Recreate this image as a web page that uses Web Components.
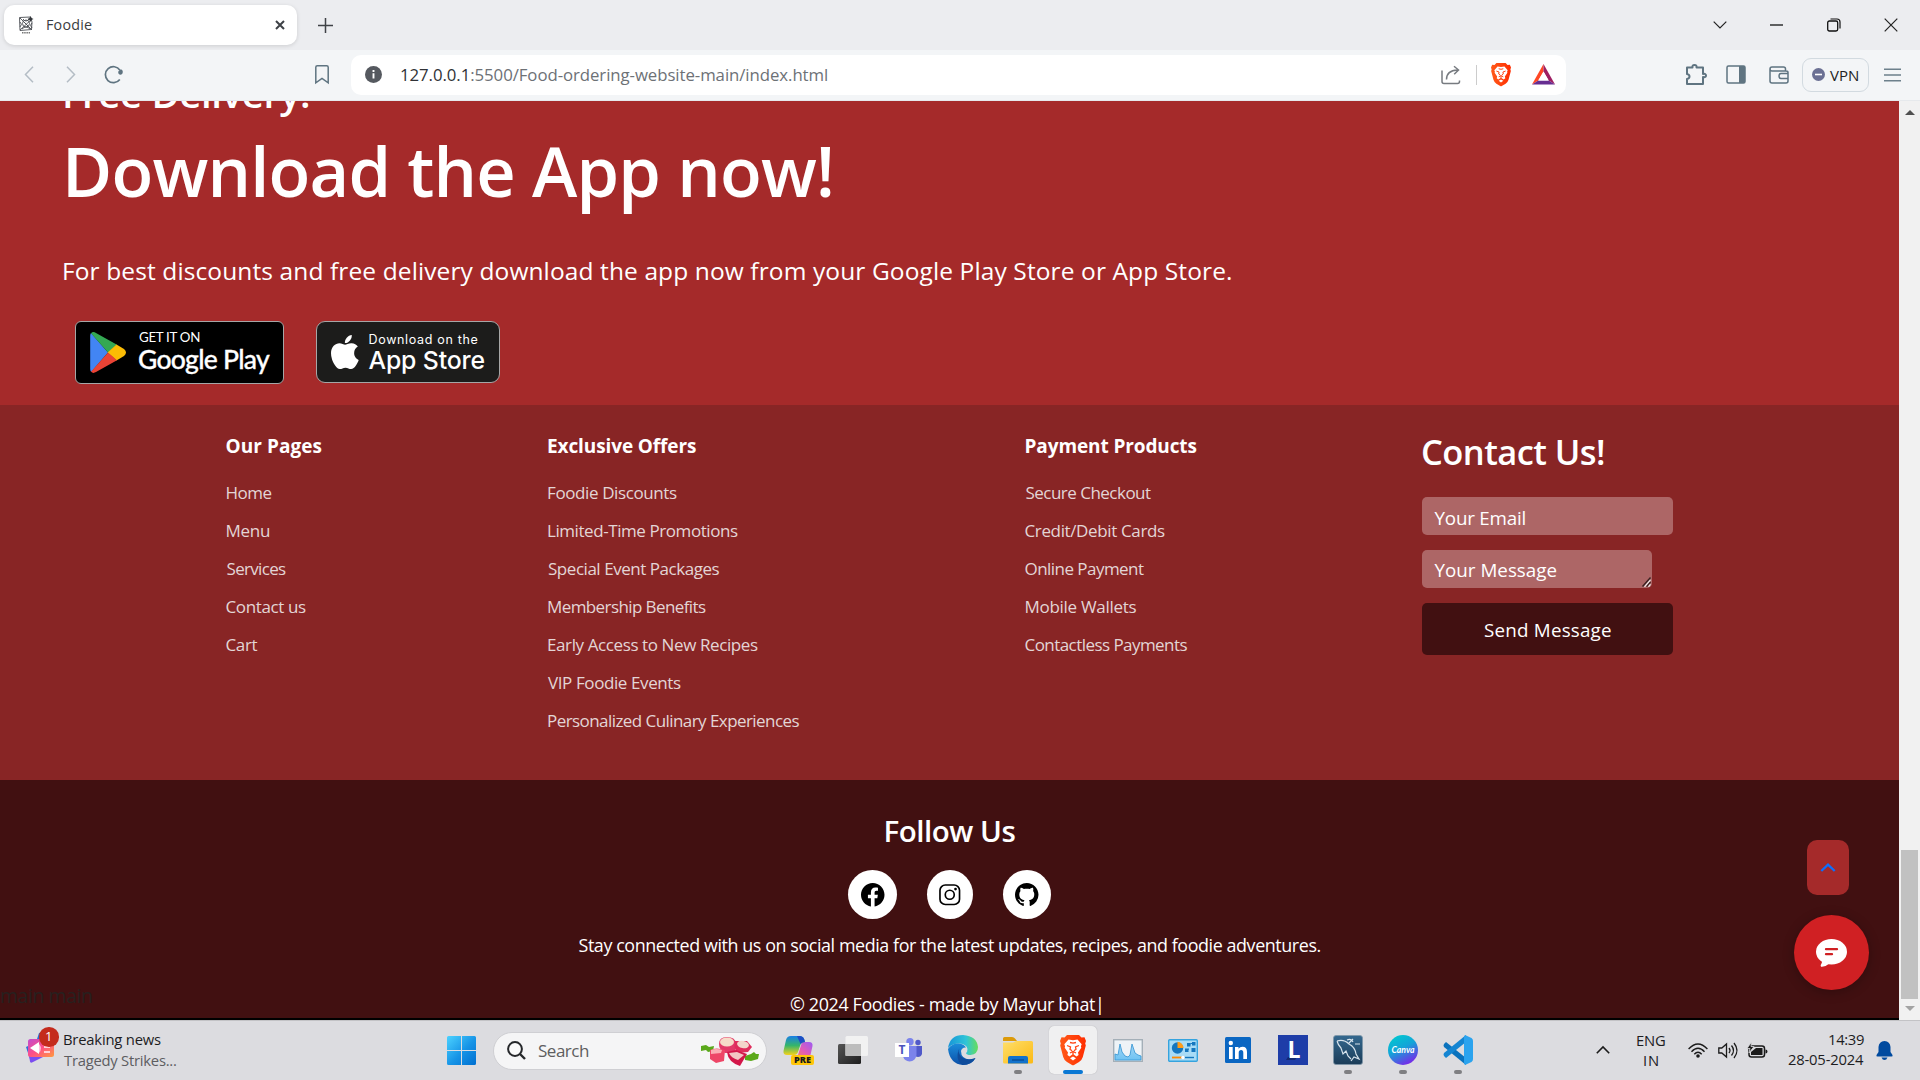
<!DOCTYPE html>
<html lang="en">
<head>
<meta charset="utf-8">
<title>Foodie</title>
<style>
html,body{margin:0;width:1920px;height:1080px;overflow:hidden;background:#dcdce0}
body{display:flex;flex-direction:column;font-family:"Open Sans","Noto Sans",sans-serif}
</style>
</head>
<body>
<browser-tabs></browser-tabs>
<browser-toolbar></browser-toolbar>
<page-view></page-view>
<task-bar></task-bar>
<script>
const lion = (id) => `<defs><linearGradient id="${id}" x1="0" x2="1"><stop offset="0" stop-color="#ff5a1a"/><stop offset="1" stop-color="#ff2d00"/></linearGradient></defs>
<path fill="url(#${id})" d="M7 0h12l2.5 2.5 3-.3L26 6l-.8 2.500.6 2-3 11.500Q22 25 19 27l-5 3q-1 .6-2 0l-5-3Q4 25 3.200 22L.2 10.500l.6-2L0 6l1.500-3.800 3 .3z"/>
<path fill="#fff" d="M8.500 4.500l4.500.8 4.500-.8 4.200 4.800-.8 2 .4 1.500-3.300 4.700.6 2.500-2.100 1.500-3.500-2.400-3.500 2.400-2.100-1.500.6-2.500-3.300-4.700.4-1.500-.8-2z"/><path fill="#fff" d="M10 23.200l3-1.700 3 1.700-3 2.200z"/>
<path fill="none" stroke="#ff4514" stroke-width="1.300" d="M7 10.500l3.500 1.300-.5 2.500 2 1.500M19 10.500l-3.500 1.300.5 2.500-2 1.500M10 18l3-1.500 3 1.500M13 16.500v3M10 7.500l3 .7 3-.7"/>`;
const ICONS = {
 favicon:[16,18,`<g fill="none" stroke="#4a4d52" stroke-width=".9"><path d="M1.500 1.500l11-.5 1.500 5-.5 7.500-11.500 1z"/><circle cx="8" cy="7.500" r="3.500"/><path d="M2 2l12 12M14 3L2 14M5 3q3 4 6 0M2 6q3 2 0 5M14 7q-3 2 0 5M4 13q4-4 8 0M6 6l4 4"/></g><path fill="#33363b" d="M12.500 0l1 2 2 1-2 1-1 2-1-2-2-1 2-1z"/><path stroke="#777" stroke-width="1.600" stroke-dasharray="1.500 .7" d="M4 16.700h8"/>`],
 x:[10,10,`<path d="M1 1l8 8M9 1L1 9" stroke="#3d4146" stroke-width="2"/>`],
 plus:[15,15,`<path d="M7.500 0v15M0 7.500h15" stroke="#3f4246" stroke-width="1.500"/>`],
 chevDown:[14,8,`<path d="M.7.7L7 7 13.300.7" fill="none" stroke="#222" stroke-width="1.200"/>`],
 min:[13,2,`<path d="M0 1h13" stroke="#111" stroke-width="1.300"/>`],
 restore:[14,14,`<path d="M3.500 1h6.500a3 3 0 0 1 3 3v6.500" fill="none" stroke="#111" stroke-width="1.200"/><rect x=".7" y="3" width="10" height="10" rx="1.700" fill="none" stroke="#111" stroke-width="1.300"/>`],
 close:[14,14,`<path d="M.7.700l12.600 12.600M13.300.7L.7 13.300" stroke="#222" stroke-width="1.200"/>`],
 back:[10,17,`<path d="M9 .8L1.500 8.500 9 16.200" fill="none" stroke="#b4bdc5" stroke-width="1.500"/>`],
 fwd:[10,17,`<path d="M1 .8l7.500 7.700L1 16.200" fill="none" stroke="#b4bdc5" stroke-width="1.500"/>`],
 reload:[20,19,`<path d="M15.800 14.500A8 8 0 1 1 16 5.200" fill="none" stroke="#5f7481" stroke-width="1.700"/><path d="M14.300 6.500q3-3.500 4.400-.5.500 3-2 3.700-3-.2-2.400-3.200z" fill="#5f7481"/>`],
 bookmark:[14,19,`<path d="M2.300.8h9.400q1.500 0 1.500 1.500v15.500L7 13.500.8 17.800V2.300Q.8.8 2.300.8z" fill="none" stroke="#5f7481" stroke-width="1.500"/>`],
 info:[17,17,`<circle cx="8.500" cy="8.500" r="8.500" fill="#55595f"/><path d="M8.500 7.300v5.200M8.500 4v1.900" stroke="#fff" stroke-width="1.900"/>`],
 share:[20,20,`<path d="M1 5.500V16.500q0 2 2 2h13.500q2 0 2-2v-1" fill="none" stroke="#777b80" stroke-width="1.500"/><path d="M5.500 14.500q0-9 11-9.500M13 1.200L17.500 5 13.200 9.200" fill="none" stroke="#777b80" stroke-width="1.500"/>`],
 brave:[26,30,lion('b')],
 bat:[23,21,`<path fill="#ff4724" d="M11.500 0v7.500L6.300 16.600 0 20.500z"/><path fill="#9e1f63" d="M11.500 0L23 20.500l-6.300-3.900-5.200-9.100z"/><path fill="#662d91" d="M0 20.500l6.300-3.900h10.400L23 20.500z"/><path fill="#fff" d="M11.500 7.500l5.200 9.100H6.300z"/>`],
 puzzle:[22,22,`<path d="M2 3.500h5.500q-.5-2.500 2-2.500t2 2.500H18v6.500q3-.7 3 1.500t-3 1.500V20H2v-5q2.500-.5 2.500-2.500T2 10z" fill="none" stroke="#5f7481" stroke-width="2" stroke-linejoin="round"/>`],
 side:[20,19,`<rect x="1" y="1" width="18" height="17" rx="1.500" fill="none" stroke="#5f7481" stroke-width="1.500"/><path fill="#5f7481" d="M13 1h6v17h-6z"/>`],
 wallet:[20,18,`<path d="M1 3v12q0 2 2 2h14q2 0 2-2V6.500q0-1.500-2-1.500H3Q1 5 1 3t2-2h11.500q2 0 2 2v2M19 7.500h-7q-2 0-2 2.500t2 2.500h7" fill="none" stroke="#5f7481" stroke-width="1.500"/>`],
 vpn:[13,13,`<circle cx="6.500" cy="6.500" r="6.500" fill="#6b7093"/><path d="M3 6.500h7" stroke="#fff" stroke-width="1.600"/>`],
 menu:[17,14,`<path d="M0 1.300h17M0 7h17M0 12.700h17" stroke="#6d808c" stroke-width="1.500"/>`],
 play:[36,41,`<path fill="#4285f4" d="M.2 4v33q0 2 1 3L18 20.500 1 1q-.8 1-.8 3z"/><path fill="#34a853" d="M1 1.200Q3-.8 6 .9l21 11.800-9 7.800z"/><path fill="#fbbc04" d="M26.500 12.500l7.500 4.500q4 3.500 0 7l-7.500 4.500-9-8z"/><path fill="#ea4335" d="M1 39.800q2 2 5 .3l21-11.800-9-7.800z"/>`],
 apple:[367,448,`<path fill="#fff" transform="translate(-4 -32)" d="M318.700 268.700c-.2-36.700 16.400-64.400 50-84.800-18.800-26.900-47.200-41.700-84.700-44.600-35.500-2.800-74.300 20.700-88.500 20.700-15 0-49.400-19.700-76.400-19.700C63.300 141.200 4 184.800 4 273.500q0 39.300 14.400 81.200c12.800 36.700 59 126.700 107.200 125.200 25.200-.6 43-17.900 75.800-17.900 31.800 0 48.300 17.900 76.400 17.900 48.600-.7 90.400-82.500 102.600-119.300-65.200-30.700-61.700-90-61.700-91.900zm-56.600-164.200c27.300-32.400 24.800-61.900 24-72.500-24.100 1.400-52 16.400-67.900 34.900-17.500 19.800-27.800 44.300-25.600 71.900 26.100 2 49.900-11.400 69.500-34.300z"/>`],
 facebook:[16,16,`<path d="M16 8.049c0-4.446-3.582-8.050-8-8.050C3.580 0-.002 3.603-.002 8.050c0 4.017 2.926 7.347 6.750 7.951v-5.625h-2.030V8.050H6.750V6.275c0-2.017 1.195-3.131 3.022-3.131.876 0 1.791.157 1.791.157v1.980h-1.009c-.993 0-1.303.621-1.303 1.258v1.510h2.218l-.354 2.326H9.250V16c3.824-.604 6.750-3.934 6.750-7.951"/>`],
 instagram:[22,22,`<rect x="1" y="1" width="20" height="20" rx="5.500" fill="none" stroke="#000" stroke-width="1.700"/><circle cx="11" cy="11" r="4.600" fill="none" stroke="#000" stroke-width="1.700"/><circle cx="16.900" cy="5.200" r="1.400"/>`],
 github:[16,16,`<path d="M8 0C3.580 0 0 3.580 0 8c0 3.540 2.290 6.530 5.470 7.590.4.070.55-.17.55-.38 0-.19-.01-.82-.01-1.490-2.010.37-2.530-.49-2.690-.94-.09-.23-.48-.94-.82-1.130-.28-.15-.68-.52-.01-.53.63-.01 1.080.58 1.230.82.72 1.210 1.870.87 2.330.66.070-.52.28-.87.51-1.070-1.780-.2-3.640-.89-3.640-3.950 0-.87.31-1.590.82-2.150-.08-.2-.36-1.020.08-2.120 0 0 .67-.21 2.200.82.64-.18 1.320-.27 2-.27s1.360.09 2 .27c1.530-1.040 2.200-.82 2.200-.82.44 1.100.16 1.920.08 2.120.51.56.82 1.270.82 2.150 0 3.070-1.870 3.750-3.650 3.950.29.25.54.73.54 1.480 0 1.070-.01 1.930-.01 2.200 0 .21.15.46.55.38A8.010 8.010 0 0 0 16 8c0-4.420-3.580-8-8-8"/>`],
 up:[16,9,`<path d="M1.300 8L8 1.700 14.700 8" fill="none" stroke="#0d6efd" stroke-width="2.300"/>`],
 chat:[31,28,`<path fill="#fff" d="M7 20l-1.500 4.500q-1.500 2-.5 3.200 4 .5 8-3z"/><ellipse cx="15.500" cy="12.700" rx="15.500" ry="12.700" fill="#fff"/><path d="M10 10.200h11M10 15.200h6" stroke="#d02023" stroke-width="2.300" stroke-linecap="round"/>`],
 arrUp:[10,5,`<path fill="#505050" d="M5 0l5 5H0z"/>`],
 arrDown:[10,5,`<path fill="#a3a3a3" d="M5 5l5-5H0z"/>`],
 grip:[9,10,`<path d="M.5 9.500l8-9M4.500 9.500l4-4.500" stroke="#3b2020" stroke-width="1.400"/><path d="M2.500 9.800l6-7M6.500 9.800l2-2.500" stroke="#eee" stroke-width="1.200"/>`],
 news:[28,31,`<defs><linearGradient id="n" x1="0" y1="0" x2="1" y2="1"><stop offset="0" stop-color="#c04bd0"/><stop offset=".5" stop-color="#ff4f86"/><stop offset="1" stop-color="#ff9a3d"/></linearGradient></defs><path fill="#2a6fd8" d="M13 1l6-1 5 7H11zM0 15l4-2v14z"/><path fill="#7b4df0" d="M3 23h18l-15 7.500q-2 .5-2-1z"/><rect x="2" y="7" width="26" height="18" rx="2.500" fill="url(#n)"/><path fill="#fff" d="M4 16l9-6v12z"/><path fill="#ffc0dc" d="M13 12q4 4 0 9z"/><path d="M18 15h6M18 20h6" stroke="#ffd0d8" stroke-width="2"/>`],
 windows:[29,29,`<defs><linearGradient id="w" x1="0" y1="0" x2="1" y2="1"><stop offset="0" stop-color="#4cd2ff"/><stop offset=".55" stop-color="#1693e6"/><stop offset="1" stop-color="#006fd0"/></linearGradient></defs><path fill="url(#w)" d="M1.500 0H14v14H0V1.500Q0 0 1.500 0zM15 0h12.500Q29 0 29 1.500V14H15zM0 15h14v14H1.500Q0 29 0 27.500zM15 15h14v12.500q0 1.500-1.500 1.500H15z"/>`],
 search:[19,19,`<circle cx="8" cy="8" r="6.900" fill="#fbfbfb" stroke="#26282b" stroke-width="2"/><path d="M13 13l5 5" stroke="#26282b" stroke-width="2.400"/>`],
 radish:[60,30,`<path fill="#5aa81a" d="M1 10l5-1 3 2 5-1-1 5-5 1-2-2-5 1zM45 20l6-2 3-2 2 2 3 0-1 5-7 2-6-1z"/><path fill="#e23a68" d="M19 8q0-7 8-7t9 6l-1 10-10 0q-6-3-6-9z"/><ellipse cx="27" cy="6" rx="7" ry="4.500" fill="#f6dcc9"/><path fill="#df2d5c" d="M35 5l12 0 5 6-4 5-10 1q-5-4-3-12z"/><ellipse cx="43" cy="8.500" rx="6" ry="3.700" fill="#f3d6cb" transform="rotate(12 43 8.500)"/><path fill="#ee4667" d="M10 14q6-3 15 0l-1 11-8 2-6-4z"/><path fill="#fbaeb4" d="M11 14q5-2 11 0l-1 3-10 1z"/><path fill="#d3174a" d="M27 16l9-2 11 4-7 12q-12-4-13-14z"/><path fill="#f3c6c4" d="M29 17l8-1 7 3-6 5q-7-2-9-7z"/>`],
 copilot:[31,30,`<defs><linearGradient id="c1" x1="0" y1="0" x2="0" y2="1"><stop offset="0" stop-color="#1a7fe6"/><stop offset=".5" stop-color="#35b56a"/><stop offset="1" stop-color="#f5d21c"/></linearGradient><linearGradient id="c2" x1="1" y1="0" x2="0" y2="1"><stop offset="0" stop-color="#9b5bf5"/><stop offset=".5" stop-color="#e45bb5"/><stop offset="1" stop-color="#ff8e4a"/></linearGradient></defs><path fill="url(#c2)" d="M19 7h7q4 0 3.500 4l-2 9q-1 4-5 4H10q4 0 5-4z"/><path fill="url(#c1)" d="M8 1h9q4 0 5 6-4 0-5 4l-2 6q-1 3-4 3H4q-4 0-3.500-4L3 5q1-4 5-4z"/><path fill="#1d4fc4" d="M14 1h3q4 0 5 6-3 0-4.500 2z"/><rect x="8" y="20" width="23" height="10" rx="2" fill="#ffc60a"/><text x="19.500" y="28.200" text-anchor="middle" font-family="Open Sans" font-weight="800" font-size="8.500" textLength="17" lengthAdjust="spacingAndGlyphs" fill="#1a1a1a">PRE</text>`],
 taskview:[30,28,`<defs><linearGradient id="t" x1="0" y1="0" x2="1" y2="1"><stop offset="0" stop-color="#555"/><stop offset="1" stop-color="#1e1e1e"/></linearGradient></defs><rect x="0" y="8" width="23" height="20" rx="1.500" fill="url(#t)"/><rect x="7.500" y="0" width="22.500" height="20" rx="1.500" fill="#f2f2f2"/><rect x="7.500" y="8" width="15.500" height="12" fill="#bdbdbd"/>`],
 teams:[27,24,`<circle cx="15" cy="3.700" r="3.700" fill="#7b83eb"/><circle cx="23" cy="4.500" r="2.700" fill="#5059c9"/><path fill="#5059c9" d="M19 8h8v8q-1 3-4 3t-4-3z"/><path fill="#7b83eb" d="M8 8h13.500v9q-1 6-7 6.500-5-.5-6.500-5z"/><rect x="0" y="5" width="14" height="14" fill="#fff"/><text x="7" y="16.200" text-anchor="middle" font-family="Open Sans" font-weight="700" font-size="12" fill="#4b53bc">T</text>`],
 edge:[30,30,`<defs><linearGradient id="e1" x1="0" x2="1"><stop offset="0" stop-color="#1795d8"/><stop offset=".6" stop-color="#2fc4d8"/><stop offset="1" stop-color="#67dd5a"/></linearGradient><linearGradient id="e2" x1="0" y1="0" x2="0" y2="1"><stop offset="0" stop-color="#1b8ddb"/><stop offset="1" stop-color="#0b4fa8"/></linearGradient></defs><path fill="url(#e1)" d="M0 13Q2 0 15 0q14 1 15 12 0 7-7.500 8-4 0-4.500-2 1.500-1 1.500-4-1-5-8-5.500Q4 8.500 0 13z"/><path fill="url(#e2)" d="M0 14Q4 8 11 8.500q5 .500 7 4-4-.5-5 3.500 0 8 9 8.500 3 0 5.500-1.500Q24 30 15 30 2 29 0 14z"/><path fill="#0f4c9c" d="M12 12q-3 5 1 9.500 5 5 14.500 1.500-4 7-13 7Q6 24 12 12z"/>`],
 folder:[30,27,`<defs><linearGradient id="f" x1="0" y1="0" x2="1" y2="1"><stop offset="0" stop-color="#ffdf6b"/><stop offset="1" stop-color="#fbb914"/></linearGradient></defs><path fill="#dc9a0a" d="M1.500 0H9q2 0 3 1.500L14 4H0V1.500Q0 0 1.500 0z"/><path fill="url(#f)" d="M0 5.500h10L13 4h15.500Q30 4 30 5.500V25q0 1.500-1.500 1.500h-27Q0 26.500 0 25z"/><path fill="#1272cc" d="M5 26.500V21q0-2 2-2h16q2 0 2 2v5.500z"/><path d="M9 23h12" stroke="#0a4f99" stroke-width="1.500"/>`],
 perf:[30,23,`<defs><linearGradient id="p" x1="0" y1="0" x2="0" y2="1"><stop offset="0" stop-color="#a5d5f5"/><stop offset="1" stop-color="#6ec3f3"/></linearGradient></defs><rect x=".7" y=".7" width="28.600" height="21.600" fill="#eef3f7" stroke="#a4afb8" stroke-width="1.400"/><path fill="url(#p)" stroke="#3e9bd6" stroke-width=".9" d="M2 21v-6l3 1 2-11 2 8 3 4 3 1 2-2 2-11 3 9 3 2 3 1v4z"/>`],
 control:[30,23,`<rect x=".7" y=".7" width="28.600" height="21.600" rx="1" fill="#a9dcf6" stroke="#35a3de" stroke-width="1.400"/><circle cx="9.500" cy="9" r="5.700" fill="#1577bf"/><path fill="#ff9c1a" d="M9.500 9V2.800A6 6 0 0 1 15.500 9z"/><path d="M18 11l3-1M22 5l3-1" stroke="#1577bf" stroke-width="1"/><g fill="#1577bf"><rect x="17" y="9.500" width="3.500" height="3.500"/><rect x="19" y="4" width="3.500" height="3.500"/><rect x="24" y="3" width="3.500" height="3.500"/><rect x="23.500" y="9" width="4" height="4"/></g><path d="M4 18.500h10" stroke="#ff8a00" stroke-width="1.800"/><path d="M15 18.500h11" stroke="#1577bf" stroke-width="1.400"/><circle cx="15" cy="18.500" r="1.800" fill="#fff"/>`],
 linkedin:[26,26,`<rect width="26" height="26" rx="1.500" fill="#0a66c2"/><circle cx="5.800" cy="6" r="2.200" fill="#fff"/><path fill="#fff" d="M4 10h3.700v12H4zM10 10h3.500v1.700q1.300-2 4-2 4.500 0 4.500 5.300v7h-3.700v-6.300q0-2.800-2.200-2.800-2.400 0-2.400 2.800V22H10z"/>`],
 ell:[30,30,`<rect width="30" height="30" fill="#1e3da8"/><path fill="#142a72" d="M10 22l-2 3h9l2-3z"/><text x="16" y="23" text-anchor="middle" font-family="Open Sans" font-weight="700" font-size="23" fill="#fff">L</text>`],
 mysql:[30,30,`<defs><linearGradient id="m" x1="0" y1="0" x2="0" y2="1"><stop offset="0" stop-color="#34688f"/><stop offset="1" stop-color="#1b3c58"/></linearGradient></defs><rect x=".5" y=".5" width="29" height="29" rx="2.500" fill="url(#m)" stroke="#7f97a8" stroke-width=".8"/><path d="M4 6q7-2 12 3 6 3 7 10l3 5-5-2-3 4M4 6q1 4 4 7l2 6 3-3 2 5 3 3M14 5q4-2 6 2M22 9h5M20 4l-4 4" fill="none" stroke="#d7e3ec" stroke-width="1.200"/>`],
 canva:[30,30,`<defs><linearGradient id="v" x1=".2" y1="0" x2=".7" y2="1"><stop offset="0" stop-color="#00c9cf"/><stop offset=".45" stop-color="#13a4d8"/><stop offset="1" stop-color="#7d22ea"/></linearGradient></defs><circle cx="15" cy="15" r="15" fill="url(#v)"/><text x="15" y="18" text-anchor="middle" font-family="Lato" font-style="italic" font-weight="700" font-size="9" textLength="23" lengthAdjust="spacingAndGlyphs" fill="#fff">Canva</text>`],
 vscode:[30,30,`<path fill="#0a72bd" d="M1 9l2-2 20 16v7L1 12Q0 10.500 1 9z"/><path fill="#1485d2" d="M1 21l2 2L23 7V0L1 18q-1 1.500 0 3z"/><path fill="#2ba3ee" d="M22 0l6.500 3q1.500 1 1.500 3v18q0 2-1.500 3L22 30q-1-1-1-3V3q0-2 1-3z"/>`],
 chevUp:[14,8,`<path d="M.8 7.200L7 1l6.200 6.200" fill="none" stroke="#1b1b1b" stroke-width="1.600"/>`],
 wifi:[20,15,`<g fill="none" stroke="#1b1b1b" stroke-width="1.400"><path d="M.6 6Q10-4 19.400 6M3.500 8.700q6.500-7 13 0M6.300 11.200q3.700-4 7.400 0"/></g><circle cx="10" cy="13" r="1.800" fill="#1b1b1b"/>`],
 vol:[20,17,`<g fill="none" stroke="#1b1b1b" stroke-width="1.300"><path d="M.8 6v5h3l4.700 4V2L3.800 6z"/><path d="M11 6q2 2.500 0 5M13.500 3.500q4 5 0 10M16 1q6 7.500 0 15"/></g>`],
 battery:[21,16,`<rect x="2" y="4" width="15.500" height="11" rx="2.500" fill="none" stroke="#1b1b1b" stroke-width="1.500"/><path fill="#1b1b1b" d="M18.500 7.500q2 0 2 2t-2 2zM4 13V10l5-4h6.500v7z"/><path fill="#1b1b1b" stroke="#dcdce0" stroke-width=".8" d="M4.500 0L0 6.500h3L2 11l5-6.500H4z"/>`],
 bell:[17,19,`<path fill="#004a9f" d="M8.500 0q5.500.3 6 6v5l2 3q.5 1.500-1 1.500H1.500Q0 15.500.5 14l2-3V6Q3 .3 8.500 0zM5.500 16.500h6q-1 2.500-3 2.500t-3-2.500z"/>`]
};

const make = (name, html, setup) => customElements.define(name, class extends HTMLElement {
  constructor(){ super(); this.attachShadow({mode:'open'}).innerHTML = html; }
  connectedCallback(){ if (setup) setup.call(this); }
});

make('ui-icon', `<style>:host{display:block;flex:none;line-height:0}svg{display:block;overflow:visible}</style>`, function(){
  const [w,h,body] = ICONS[this.getAttribute('name')];
  const W = this.getAttribute('w') || w, H = this.getAttribute('h') || h;
  this.shadowRoot.querySelectorAll('svg').forEach(s => s.remove());
  this.shadowRoot.innerHTML += `<svg width="${W}" height="${H}" viewBox="0 0 ${w} ${h}" preserveAspectRatio="none">${body}</svg>`;
});

make('browser-tabs', `<style>
:host{display:flex;height:50px;flex:none;background:#ecedf0;align-items:center;font-size:14.300px;color:#3a3d41;box-sizing:border-box;padding-left:4px}
.tab{display:flex;align-items:center;width:293px;height:40px;background:#fff;border-radius:10px;box-shadow:0 1px 4px #0002;box-sizing:border-box;padding:0 12px 0 14px;line-height:40px}
.tab ui-text{margin-left:13px}.tab .c{margin-left:auto}
.plus{margin-left:21px}.win{margin-left:auto;display:flex;width:229px}.win span{width:57.200px;display:flex;justify-content:center;align-items:center}
</style><div class="tab"><ui-icon name="favicon"></ui-icon><ui-text w="45">Foodie</ui-text><ui-icon class="c" name="x"></ui-icon></div>
<ui-icon class="plus" name="plus"></ui-icon><div class="win"><span><ui-icon name="chevDown"></ui-icon></span><span><ui-icon name="min"></ui-icon></span><span><ui-icon name="restore"></ui-icon></span><span><ui-icon name="close"></ui-icon></span></div>`);

make('browser-toolbar', `<style>
:host{display:flex;height:51px;flex:none;background:#f3f5f7;align-items:center;box-sizing:border-box;padding:0 0 1px 24px;border-bottom:1px solid #e6e9ec}
.fwd{margin-left:32px}.rel{margin-left:28px}.bm{margin-left:191px}
.bar{margin-left:22px;width:1215px;height:40px;background:#fff;border-radius:10px;display:flex;align-items:center;padding-left:14px;box-sizing:border-box;font-size:16.800px;line-height:39px;color:#6d7176}
.bar b{font-weight:400;color:#303236}
.bar .u{margin-left:19px}.bar .s{margin-left:auto}.bar i{width:1px;height:20px;background:#ccc;margin:0 14px 0 15px}.bar .bat{margin:0 11px 0 21px}
.pz{margin-left:119px}.sd{margin-left:19px}.wl{margin-left:23px}
.vpn{margin-left:13px;width:67px;height:34px;box-sizing:border-box;border:1px solid #d2dae0;border-radius:9px;display:flex;align-items:center;padding-left:9px;font-size:15px;line-height:32px;color:#222;gap:5px}
.mn{margin-left:15px}
</style><ui-icon name="back"></ui-icon><ui-icon class="fwd" name="fwd"></ui-icon><ui-icon class="rel" name="reload"></ui-icon><ui-icon class="bm" name="bookmark"></ui-icon>
<div class="bar"><ui-icon name="info"></ui-icon><ui-text class="u" w="426"><b>127.0.0.1</b>:5500/Food-ordering-website-main/index.html</ui-text>
<ui-icon class="s" name="share"></ui-icon><i></i><ui-icon name="brave" w="20" h="23"></ui-icon><ui-icon class="bat" name="bat"></ui-icon></div>
<ui-icon class="pz" name="puzzle"></ui-icon><ui-icon class="sd" name="side"></ui-icon><ui-icon class="wl" name="wallet"></ui-icon>
<div class="vpn"><ui-icon name="vpn"></ui-icon><ui-text w="28">VPN</ui-text></div><ui-icon class="mn" name="menu"></ui-icon>`);

make('store-badge', `<style>
:host{display:flex;box-sizing:border-box;border:1px solid #a6a6a6;color:#fff}
.t{display:flex;flex-direction:column;align-items:flex-start}
</style><slot name="logo"></slot><div class="t"><slot></slot></div>`);

make('app-promo', `<style>
:host{display:flex;flex-direction:column;align-items:flex-start;height:304px;flex:none;box-sizing:border-box;padding-left:63px;background:#a52a2a;color:#fff;overflow:hidden}
.a{font-size:38.500px;font-weight:600;line-height:48px;margin-top:-32px;margin-left:2px}
.b{font-size:68.500px;font-weight:600;line-height:84px;margin-top:12px;margin-left:5px}
.c{font-size:24.500px;line-height:34px;margin-top:41px;margin-left:1px}
.r{display:flex;margin:33px 0 0 12px;gap:32px}
.g{width:208.500px;height:62.500px;border-radius:6px;background:#000;padding-left:14px;font-family:Lato,sans-serif}
.g [slot=logo]{margin-top:10px}.g .l1{font-size:13.300px;line-height:16px;margin:7px 0 0 13px}.g .l2{font-size:26.500px;line-height:30px;font-weight:500;-webkit-text-stroke:.3px #fff;margin:-1px 0 0 13px}
.p{width:184.500px;height:61.500px;border-radius:9px;background:#1c1c1b;padding-left:14px;font-family:Inter,sans-serif}
.p [slot=logo]{margin-top:12.500px}.p .l1{font-size:12.500px;line-height:16px;margin:10px 0 0 12px}.p .l2{font-size:24.800px;line-height:28px;font-weight:500;margin:-2px 0 0 11px}
</style><ui-text class="a" w="244">Free Delivery!</ui-text><ui-text class="b" w="763">Download the App now!</ui-text>
<ui-text class="c" w="1167">For best discounts and free delivery download the app now from your Google Play Store or App Store.</ui-text>
<div class="r"><store-badge class="g"><ui-icon slot="logo" name="play"></ui-icon><ui-text class="l1" w="61">GET IT ON</ui-text><ui-text class="l2" w="131">Google Play</ui-text></store-badge>
<store-badge class="p"><ui-icon slot="logo" name="apple" w="27" h="34"></ui-icon><ui-text class="l1" w="108">Download on the</ui-text><ui-text class="l2" w="116">App Store</ui-text></store-badge></div>`);

make('link-column', `<style>
:host{display:flex;flex-direction:column;align-items:flex-start;padding-top:25.500px;font-size:17px;line-height:38px;color:#e3d5d5}
::slotted([slot=head]){font-size:19px;font-weight:700;line-height:30px;color:#fff;margin-bottom:13px}
</style><slot name="head"></slot><slot></slot>`);

make('contact-form', `<style>
:host{display:flex;flex-direction:column;align-items:flex-start;padding-top:25px;color:#fff;width:251px;font-size:18.800px}
.h{font-size:34.500px;font-weight:600;line-height:44px;margin-bottom:23px;margin-left:1px}
.f{height:38px;border-radius:5px;background:#ad6666;width:251px;box-sizing:border-box;padding-left:12.500px;margin-bottom:15px;line-height:43px;display:flex;justify-content:space-between}
.m{width:230px;line-height:41px}.m ui-icon{align-self:flex-end;margin:0 1px 1px 0}
.s{height:52px;width:251px;border-radius:5px;background:#411011;line-height:55px;display:flex;justify-content:center}
</style><ui-text class="h" w="181">Contact Us!</ui-text><div class="f"><ui-text w="91">Your Email</ui-text></div>
<div class="f m"><ui-text w="122">Your Message</ui-text><ui-icon name="grip"></ui-icon></div><div class="s"><ui-text w="127">Send Message</ui-text></div>`);

make('footer-links', `<style>
:host{display:flex;align-items:flex-start;height:375px;flex:none;background:#882525;box-sizing:border-box;padding-left:226.500px}
.c1{width:321.500px}.c2{width:477.500px}.c3{width:396.500px}
</style><link-column class="c1"><ui-text slot="head" w="95">Our Pages</ui-text><ui-text w="45">Home</ui-text><ui-text w="42.500">Menu</ui-text><ui-text w="59.500">Services</ui-text><ui-text w="79.500">Contact us</ui-text><ui-text w="31">Cart</ui-text></link-column>
<link-column class="c2"><ui-text slot="head" w="148">Exclusive Offers</ui-text><ui-text w="129">Foodie Discounts</ui-text><ui-text w="190">Limited-Time Promotions</ui-text><ui-text w="171.500">Special Event Packages</ui-text><ui-text w="158">Membership Benefits</ui-text><ui-text w="210">Early Access to New Recipes</ui-text><ui-text w="133">VIP Foodie Events</ui-text><ui-text w="251.500">Personalized Culinary Experiences</ui-text></link-column>
<link-column class="c3"><ui-text slot="head" w="171">Payment Products</ui-text><ui-text w="125.500">Secure Checkout</ui-text><ui-text w="139.500">Credit/Debit Cards</ui-text><ui-text w="118.500">Online Payment</ui-text><ui-text w="111">Mobile Wallets</ui-text><ui-text w="162">Contactless Payments</ui-text></link-column>
<contact-form></contact-form>`);

make('follow-us', `<style>
:host{display:flex;flex-direction:column;align-items:center;height:238px;flex:none;background:#411011;box-sizing:border-box;padding-top:30.500px;color:#fff;font-size:17.900px;line-height:26px}
.h{font-size:29.500px;font-weight:600;line-height:40px;margin-left:2px}
.r{display:flex;gap:30px;margin-top:19.500px}
.r span{height:49px;border-radius:50%;background:#fff;display:flex;align-items:center;justify-content:center}
.s{margin-top:13px}.c{margin:33px 8px 0 0}
</style><ui-text class="h" w="130">Follow Us</ui-text>
<div class="r"><span style="width:49px"><ui-icon name="facebook" w="23.500" h="23.500"></ui-icon></span><span style="width:46px"><ui-icon name="instagram" w="21.500" h="21.500"></ui-icon></span><span style="width:48px"><ui-icon name="github" w="23.500" h="23.500"></ui-icon></span></div>
<ui-text class="s" w="742">Stay connected with us on social media for the latest updates, recipes, and foodie adventures.</ui-text>
<ui-text class="c" w="311">© 2024 Foodies - made by Mayur bhat|</ui-text>`);

make('scroll-bar', `<style>
:host{display:flex;flex-direction:column;align-items:center;width:21px;background:#f1f1f1;box-sizing:border-box;padding:9px 0 9px}
.t{width:17px;height:149px;background:#c1c1c1;margin:735px 0 7px}
</style><ui-icon name="arrUp"></ui-icon><div class="t"></div><ui-icon name="arrDown"></ui-icon>`);

make('page-view', `<style>
:host{display:flex;height:919px;flex:none;background:#000}
.doc{position:relative;width:1899px;height:917px;overflow:hidden;display:flex;flex-direction:column}
.top,.chat,.main{position:absolute;display:flex;align-items:center;justify-content:center}
.top{left:1807px;top:739px;width:42px;height:55px;border-radius:10px;background:#a52a2a}
.chat{left:1794px;top:814px;width:75px;height:75px;border-radius:50%;background:#d02023;box-shadow:0 2px 12px #0004}
.main{left:1px;top:881px;font-size:19.500px;line-height:28px;color:#27201f}
</style><div class="doc"><app-promo></app-promo><footer-links></footer-links><follow-us></follow-us>
<div class="main"><ui-text w="91">main main</ui-text></div><div class="top"><ui-icon name="up"></ui-icon></div><div class="chat"><ui-icon name="chat"></ui-icon></div></div>
<scroll-bar></scroll-bar>`);

make('task-item', `<style>
:host{display:flex;width:55px;height:60px;flex:none;align-items:center;justify-content:center}
.b{position:relative;width:48px;height:48px;display:flex;align-items:center;justify-content:center;border-radius:5px;box-sizing:border-box}
:host([active]) .b{background:#f0f0f1;box-shadow:0 0 1px #0004}
.d{position:absolute;bottom:0;height:4px;width:8px;border-radius:2px;background:#7f7f82;display:none}
:host([open]) .d{display:block}:host([active]) .d{display:block;width:20px;background:#0a78d4}
</style><div class="b"><slot></slot><span class="d"></span></div>`);

make('task-bar', `<style>
:host{display:flex;height:60px;flex:none;background:#dcdce0;border-top:1px solid #c3c3c6;box-sizing:border-box;align-items:center;font-size:14.800px;color:#1d1d1f}
.n{display:flex;width:447px;box-sizing:border-box;padding-left:26px;height:59px}
.i{position:relative;margin-top:9px;height:31px}.i ui-icon{margin-top:2px}
.i span{position:absolute;left:13px;top:-3px;width:19.500px;height:19.500px;border-radius:50%;background:#c42b1c;color:#fff;font-size:13px;line-height:19.500px;display:flex;justify-content:center}
.t{display:flex;flex-direction:column;align-items:flex-start;margin-left:10px;line-height:20.500px;padding-top:8px}
.t .g{color:#5d5d61}
.s{margin-left:17px;width:274px;height:38px;box-sizing:border-box;background:#f5f5f6;border:1px solid #cfcfd3;border-radius:19px;display:flex;align-items:center;padding:0 6px 0 13px;font-size:17px;color:#5e5e60;line-height:36px}
.s ui-text{margin-left:12px}.s .r{margin-left:auto}
.a{display:flex;margin-left:3.500px;margin-top:-1px}
.c{margin-left:110.500px}
.l{display:flex;flex-direction:column;align-items:center;line-height:20px;margin-left:27px;width:28px;padding-bottom:2px}
.w{margin-left:23px}.v{margin-left:10px}.k{margin-left:9px}.w,.v,.k,.c{margin-top:-1px}
.d{display:flex;flex-direction:column;align-items:flex-end;line-height:20px;width:76px;margin-left:20px;padding-bottom:3px}
.e{margin-left:12px;margin-top:-1px}
</style><div class="n"><div class="i"><ui-icon name="news"></ui-icon><span>1</span></div><div class="t"><ui-text w="97">Breaking news</ui-text><ui-text class="g" w="112">Tragedy Strikes...</ui-text></div></div>
<ui-icon name="windows"></ui-icon>
<div class="s"><ui-icon name="search"></ui-icon><ui-text w="51">Search</ui-text><ui-icon class="r" name="radish"></ui-icon></div>
<div class="a"><task-item><ui-icon name="copilot"></ui-icon></task-item><task-item><ui-icon name="taskview"></ui-icon></task-item><task-item><ui-icon name="teams"></ui-icon></task-item><task-item><ui-icon name="edge"></ui-icon></task-item><task-item open><ui-icon name="folder"></ui-icon></task-item><task-item active><ui-icon name="brave"></ui-icon></task-item><task-item><ui-icon name="perf"></ui-icon></task-item><task-item><ui-icon name="control"></ui-icon></task-item><task-item><ui-icon name="linkedin"></ui-icon></task-item><task-item><ui-icon name="ell"></ui-icon></task-item><task-item open><ui-icon name="mysql"></ui-icon></task-item><task-item open><ui-icon name="canva"></ui-icon></task-item><task-item open><ui-icon name="vscode"></ui-icon></task-item></div>
<ui-icon class="c" name="chevUp"></ui-icon><div class="l"><ui-text w="28">ENG</ui-text><ui-text w="14">IN</ui-text></div>
<ui-icon class="w" name="wifi"></ui-icon><ui-icon class="v" name="vol"></ui-icon><ui-icon class="k" name="battery"></ui-icon>
<div class="d"><ui-text w="35">14:39</ui-text><ui-text w="76">28-05-2024</ui-text></div><ui-icon class="e" name="bell"></ui-icon>`);

/* Text whose visible ink spans exactly the width given in the w attribute. */
const ctx = document.createElement('canvas').getContext('2d');
make('ui-text', `<style>:host{display:block;flex:none;white-space:pre;font-variant-ligatures:none}span{display:inline-block}</style><span><slot></slot></span>`, function(){
  const cs = getComputedStyle(this), w = +this.getAttribute('w'), s = this.textContent;
  ctx.font = `${cs.fontWeight} ${cs.fontSize} ${cs.fontFamily}`;
  const m = ctx.measureText(s);
  const ink = m.actualBoundingBoxLeft + m.actualBoundingBoxRight;
  const span = this.shadowRoot.querySelector('span');
  this.style.width = w + 'px';
  span.style.letterSpacing = (w - ink) / (s.length - 1) + 'px';
  span.style.marginLeft = m.actualBoundingBoxLeft + 'px';
});
</script>
</body>
</html>
